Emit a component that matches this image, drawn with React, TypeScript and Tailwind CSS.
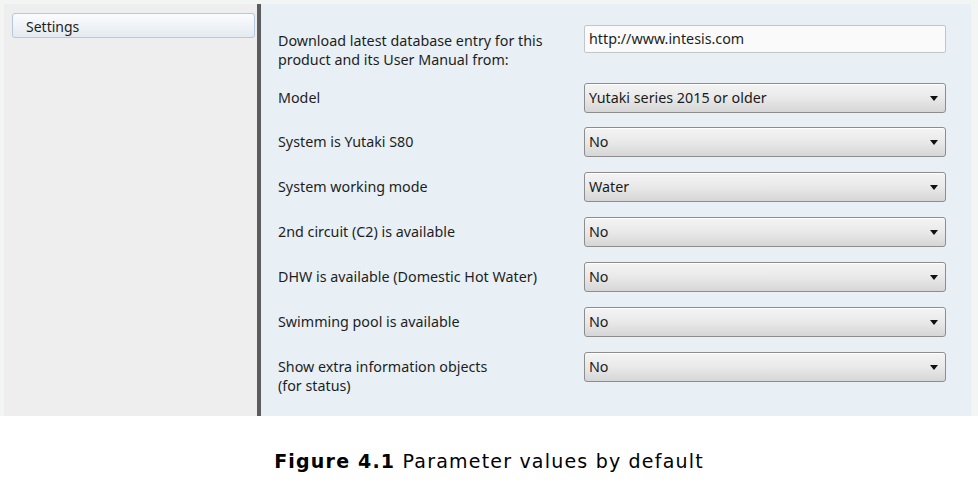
import React from "react";

const rows = [
  { label: ["System is Yutaki S80"], value: "No" },
  { label: ["System working mode"], value: "Water" },
  { label: ["2nd circuit (C2) is available"], value: "No" },
  { label: ["DHW is available (Domestic Hot Water)"], value: "No" },
  { label: ["Swimming pool is available"], value: "No" },
  { label: ["Show extra information objects", "(for status)"], value: "No" },
];

function Combo({ value }: { value: string }) {
  return (
    <div className="relative h-[30px] w-[362px] rounded-[3px] border border-[#8d8d8d] bg-gradient-to-b from-[#f4f4f4] via-[#e9e9e9] to-[#d6d6d6] shadow-[inset_0_1px_0_#ffffff]">
      <span className="absolute left-[4px] top-[4px] text-[14.3px] leading-[20px] text-[#1b1b1b]">{value}</span>
      <svg className="absolute right-[7px] top-[12px]" width="8" height="5" viewBox="0 0 8 5">
        <path d="M0 0 H8 L4 5 Z" fill="#111" />
      </svg>
    </div>
  );
}

export default function App() {
  return (
    <div className="w-[978px] h-[482px] bg-white" style={{ fontFamily: '"Noto Sans", "Open Sans", sans-serif' }}>
      {/* Dialog area */}
      <div className="h-[416px] flex bg-[#f3f4f4] pt-[4px] pl-[4px] pr-[7px]">
        {/* Left: tree */}
        <div className="w-[253px] bg-[#eeeeee] pt-[9px] pl-[8px] pr-[2px]">
          <div className="h-[25px] rounded-[3px] border border-[#b5c8dc] bg-gradient-to-b from-[#fbfcfd] to-[#e4eaf0] pl-[13px] text-[14px] leading-[25px] text-[#1e1e1e]">
            Settings
          </div>
        </div>
        <div className="w-[4px] bg-[#5c5c5c]" />

        {/* Right: parameters */}
        <div className="flex-1 bg-[#e8f0f6] pl-[17px] pt-[21px] text-[14.3px] leading-[19px] text-[#1e1e1e]">
          <div className="flex h-[58px] items-start">
            <div className="w-[306px] pt-[6px]">
              <div>Download latest database entry for this</div>
              <div>product and its User Manual from:</div>
            </div>
            <div className="h-[28px] w-[362px] rounded-[2px] border border-[#c3c6c9] bg-[#fafafa] pl-[4px] pt-[3px]">
              http://www.intesis.com
            </div>
          </div>
          <div className="flex h-[44px] items-start">
            <div className="w-[306px] pt-[5px]">Model</div>
            <Combo value="Yutaki series 2015 or older" />
          </div>
          {rows.map((r, i) => (
            <div key={i} className="flex h-[45px] items-start">
              <div className="w-[306px] pt-[5px]">
                {r.label.map((l) => (
                  <div key={l}>{l}</div>
                ))}
              </div>
              <Combo value={r.value} />
            </div>
          ))}
        </div>
      </div>

      {/* Caption */}
      <div className="pt-[34px] text-center text-[19px] leading-[22px] tracking-[1.2px] text-black" style={{ fontFamily: '"DejaVu Sans", Verdana, sans-serif' }}>
        <span className="font-bold">Figure 4.1</span> Parameter values by default
      </div>
    </div>
  );
}
